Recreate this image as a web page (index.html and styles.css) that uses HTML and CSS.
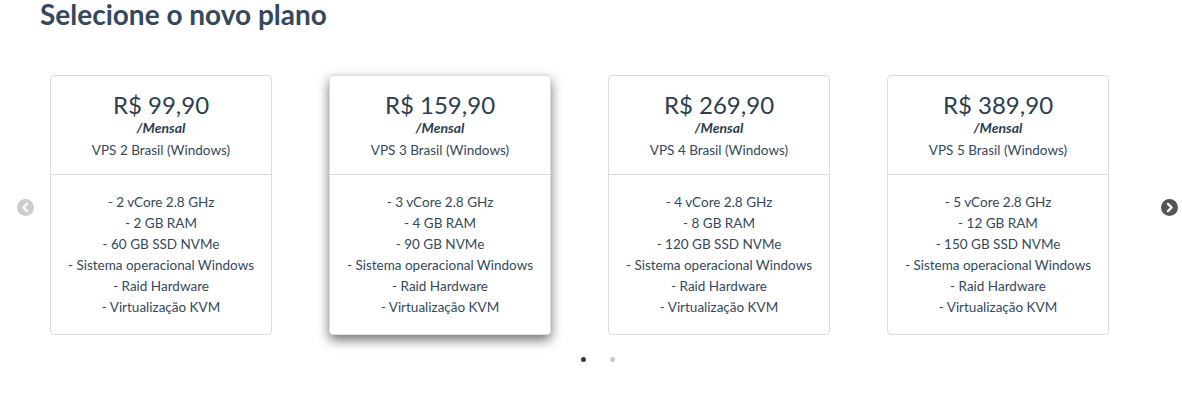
FILE: index.html
```html
<!DOCTYPE html>
<html>
<head>
  <title>Selecione o novo plano</title>
  <link rel="stylesheet" href="styles.css">
</head>
<body>
  <div class="page">
    <h2 class="title">Selecione o novo plano</h2>

    <div class="carousel">
      <div class="arrow-slot left">
        <span class="arrow disabled">
          <svg viewBox="0 0 16 16" width="17" height="17"><circle cx="8" cy="8" r="8" fill="#cccccc"/><path d="M9.4 4.6 L6 8 L9.4 11.4" fill="none" stroke="#fff" stroke-width="2.2" stroke-linecap="round" stroke-linejoin="round"/></svg>
        </span>
      </div>

      <div class="cards">
        <div class="card">
          <div class="card-head">
            <div class="price">R$ 99,90</div>
            <div class="period">/Mensal</div>
            <div class="name">VPS 2 Brasil (Windows)</div>
          </div>
          <div class="card-body">
            <div>- 2 vCore 2.8 GHz</div>
            <div>- 2 GB RAM</div>
            <div>- 60 GB SSD NVMe</div>
            <div>- Sistema operacional Windows</div>
            <div>- Raid Hardware</div>
            <div>- Virtualização KVM</div>
          </div>
        </div>

        <div class="card selected">
          <div class="card-head">
            <div class="price">R$ 159,90</div>
            <div class="period">/Mensal</div>
            <div class="name">VPS 3 Brasil (Windows)</div>
          </div>
          <div class="card-body">
            <div>- 3 vCore 2.8 GHz</div>
            <div>- 4 GB RAM</div>
            <div>- 90 GB NVMe</div>
            <div>- Sistema operacional Windows</div>
            <div>- Raid Hardware</div>
            <div>- Virtualização KVM</div>
          </div>
        </div>

        <div class="card">
          <div class="card-head">
            <div class="price">R$ 269,90</div>
            <div class="period">/Mensal</div>
            <div class="name">VPS 4 Brasil (Windows)</div>
          </div>
          <div class="card-body">
            <div>- 4 vCore 2.8 GHz</div>
            <div>- 8 GB RAM</div>
            <div>- 120 GB SSD NVMe</div>
            <div>- Sistema operacional Windows</div>
            <div>- Raid Hardware</div>
            <div>- Virtualização KVM</div>
          </div>
        </div>

        <div class="card">
          <div class="card-head">
            <div class="price">R$ 389,90</div>
            <div class="period">/Mensal</div>
            <div class="name">VPS 5 Brasil (Windows)</div>
          </div>
          <div class="card-body">
            <div>- 5 vCore 2.8 GHz</div>
            <div>- 12 GB RAM</div>
            <div>- 150 GB SSD NVMe</div>
            <div>- Sistema operacional Windows</div>
            <div>- Raid Hardware</div>
            <div>- Virtualização KVM</div>
          </div>
        </div>
      </div>

      <div class="arrow-slot right">
        <span class="arrow">
          <svg viewBox="0 0 16 16" width="17" height="17"><circle cx="8" cy="8" r="8" fill="#555555"/><path d="M6.6 4.6 L10 8 L6.6 11.4" fill="none" stroke="#fff" stroke-width="2.2" stroke-linecap="round" stroke-linejoin="round"/></svg>
        </span>
      </div>
    </div>

    <div class="dots">
      <span class="dot active"></span>
      <span class="dot"></span>
    </div>
  </div>
</body>
</html>
```

FILE: styles.css
```css
body {
  margin: 0;
  padding: 0;
  background-color: #ffffff;
  color: #34495e;
  font-family: Lato, "Liberation Sans", sans-serif;
}

.page {
  padding: 0;
}

.title {
  margin: 0;
  padding-left: 40px;
  font-size: 28px;
  line-height: 28px;
  font-weight: 700;
  color: #34495e;
}

.carousel {
  display: flex;
  align-items: center;
  margin-top: 47px;
}

.arrow-slot {
  display: flex;
  align-items: center;
}

.arrow-slot.left {
  width: 50px;
  justify-content: center;
  margin-top: 4px;
}

.arrow-slot.right {
  margin-left: 52px;
  margin-top: 4px;
}

.arrow svg {
  display: block;
}

.cards {
  display: flex;
  gap: 57px;
}

.card {
  width: 220px;
  border: 1px solid #dddddd;
  border-radius: 4px;
  background-color: #ffffff;
  text-align: center;
}

.card.selected {
  box-shadow: 0 5px 12px rgba(0, 0, 0, 0.55);
}

.card-head {
  padding: 14px 0 14px;
  border-bottom: 1px solid #dddddd;
}

.price {
  font-size: 24px;
  line-height: 30px;
  color: #2c3e50;
}

.period {
  font-size: 14px;
  line-height: 16px;
  font-weight: 700;
  font-style: italic;
  color: #2c3e50;
}

.name {
  margin-top: 4px;
  font-size: 13.5px;
  line-height: 20px;
}

.card-body {
  padding: 17px 0 16px;
  font-size: 13.5px;
  line-height: 21px;
}

.dots {
  display: flex;
  gap: 24px;
  justify-content: center;
  padding-left: 14px;
  margin-top: 22px;
}

.dot {
  width: 5px;
  height: 5px;
  border-radius: 50%;
  background-color: #c8c8c8;
}

.dot.active {
  background-color: #333a44;
}
```
